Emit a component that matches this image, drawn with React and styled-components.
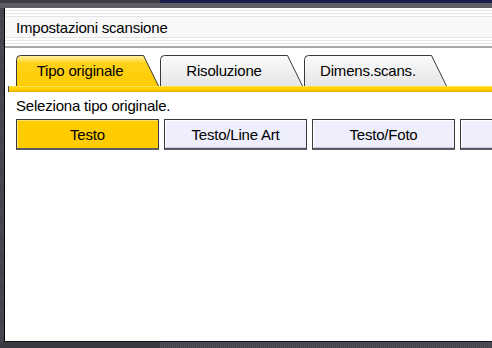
import React from "react";
import styled, { createGlobalStyle } from "styled-components";

const GlobalStyle = createGlobalStyle`
  html, body {
    margin: 0;
    padding: 0;
    background: #46464e;
  }
  body {
    font-family: "Liberation Sans", Arial, sans-serif;
    color: #000;
  }
`;

const tabs = [
  { label: "Tipo originale", active: true },
  { label: "Risoluzione" },
  { label: "Dimens.scans." },
];

const types = [
  { label: "Testo", active: true },
  { label: "Testo/Line Art" },
  { label: "Testo/Foto" },
  { label: "" },
];

const Tab = ({ label, active, id }) => (
  <TabBox>
    <TabShape viewBox="0 0 143 31" preserveAspectRatio="none">
      <defs>
        <linearGradient id={`g${id}`} x1="0" y1="0" x2="0" y2="1">
          {active ? (
            <>
              <stop offset="0" stopColor="#fff3a8" />
              <stop offset="0.25" stopColor="#ffd21a" />
              <stop offset="1" stopColor="#ffcc00" />
            </>
          ) : (
            <>
              <stop offset="0" stopColor="#fbfbfb" />
              <stop offset="1" stopColor="#e6e6e6" />
            </>
          )}
        </linearGradient>
      </defs>
      <path
        d="M0.5,31 L0.5,4.5 Q0.5,0.5 4.5,0.5 L127.5,0.5 L142.5,31"
        fill={`url(#g${id})`}
        stroke="#3a3a3a"
        strokeWidth="1"
      />
    </TabShape>
    <TabLabel>{label}</TabLabel>
  </TabBox>
);

const App = () => {
  return (
    <>
      <GlobalStyle />
      <Screen>
        <TopFrame>
          <TopLeft />
          <TopRight />
        </TopFrame>
        <TopGray />
        <Middle>
          <Panel>
            <Header>Impostazioni scansione</Header>
            <HeaderRule />
            <TabsRow>
              {tabs.map((t, i) => (
                <Tab key={t.label} id={i} label={t.label} active={t.active} />
              ))}
            </TabsRow>
            <TabLine />
            <Prompt>Seleziona tipo originale.</Prompt>
            <ButtonRow>
              {types.map((b, i) => (
                <TypeButton key={i} $active={b.active}>
                  {b.label}
                </TypeButton>
              ))}
            </ButtonRow>
          </Panel>
          <RightEdge />
        </Middle>
        <BottomFrame>
          <BottomLeft />
          <BottomRight />
        </BottomFrame>
      </Screen>
    </>
  );
};

const Screen = styled.div`
  width: 492px;
  height: 348px;
  display: flex;
  flex-direction: column;
  overflow: hidden;
  background: repeating-linear-gradient(
    45deg,
    #4a4a52 0 1px,
    #404048 1px 2px
  );
`;

const TopFrame = styled.div`
  display: flex;
  height: 3px;
`;

const TopLeft = styled.div`
  width: 160px;
  background: #3c3c44;
`;

const TopRight = styled.div`
  flex: 1;
  background: #1c1f4c;
`;

const TopGray = styled.div`
  height: 5px;
  background: #5e5e66;
`;

const Middle = styled.div`
  flex: 1;
  display: flex;
  padding-left: 4px;
`;

const Panel = styled.div`
  flex: 1;
  background: #fff;
  border-left: 1px solid #000;
  border-bottom: 1px solid #111;
  display: flex;
  flex-direction: column;
`;

const RightEdge = styled.div`
  width: 2px;
  background: #000;
`;

const Header = styled.div`
  height: 38px;
  box-sizing: border-box;
  padding-left: 11px;
  display: flex;
  align-items: center;
  font-size: 15px;
  letter-spacing: -0.2px;
  background:
    linear-gradient(
      to bottom,
      transparent 0 9px,
      rgba(248, 248, 248, 0.9) 9px 29px,
      transparent 29px
    ),
    repeating-linear-gradient(
      to bottom,
      #ffffff 0 2px,
      #e4e4e4 2px 3px
    );
`;

const HeaderRule = styled.div`
  height: 2px;
  background: #a8a8a8;
`;

const TabsRow = styled.div`
  display: flex;
  gap: 1px;
  padding: 7px 0 0 11px;
  height: 31px;
`;

const TabBox = styled.div`
  position: relative;
  width: 143px;
  height: 31px;
  display: flex;
  align-items: center;
`;

const TabShape = styled.svg`
  position: absolute;
  inset: 0;
  width: 100%;
  height: 100%;
`;

const TabLabel = styled.span`
  position: relative;
  width: 128px;
  text-align: center;
  font-size: 15px;
  letter-spacing: -0.2px;
`;

const TabLine = styled.div`
  height: 6px;
  margin-left: 3px;
  border-left: 1px solid #555;
  background: linear-gradient(
    to bottom,
    #ffe45a 0 1px,
    #ffd200 1px 4px,
    #f0b800 4px
  );
`;

const Prompt = styled.div`
  height: 27px;
  box-sizing: border-box;
  padding: 5px 0 0 11px;
  font-size: 15px;
  letter-spacing: -0.2px;
  line-height: 18px;
`;

const ButtonRow = styled.div`
  display: flex;
  gap: 5px;
  padding-left: 11px;
`;

const TypeButton = styled.div`
  flex: 0 0 143px;
  height: 31px;
  box-sizing: border-box;
  display: flex;
  align-items: center;
  justify-content: center;
  font-size: 15px;
  letter-spacing: -0.2px;
  border: 1px solid #3a3a3a;
  border-bottom: 2px solid #5a5a66;
  background: ${(p) => (p.$active ? "#ffcc00" : "#eeeefc")};
  box-shadow: ${(p) =>
    p.$active
      ? "inset 1px 1px 0 #ffe36a"
      : "inset 1px 1px 0 #ffffff, inset 0 -1px 0 #c8c8d8"};
`;

const BottomFrame = styled.div`
  display: flex;
  height: 6px;
`;

const BottomLeft = styled.div`
  width: 160px;
  background: #3a3a42;
`;

const BottomRight = styled.div`
  flex: 1;
  background: repeating-linear-gradient(
    90deg,
    #4e4e58 0 1px,
    #44444c 1px 2px
  );
`;

export default App;
